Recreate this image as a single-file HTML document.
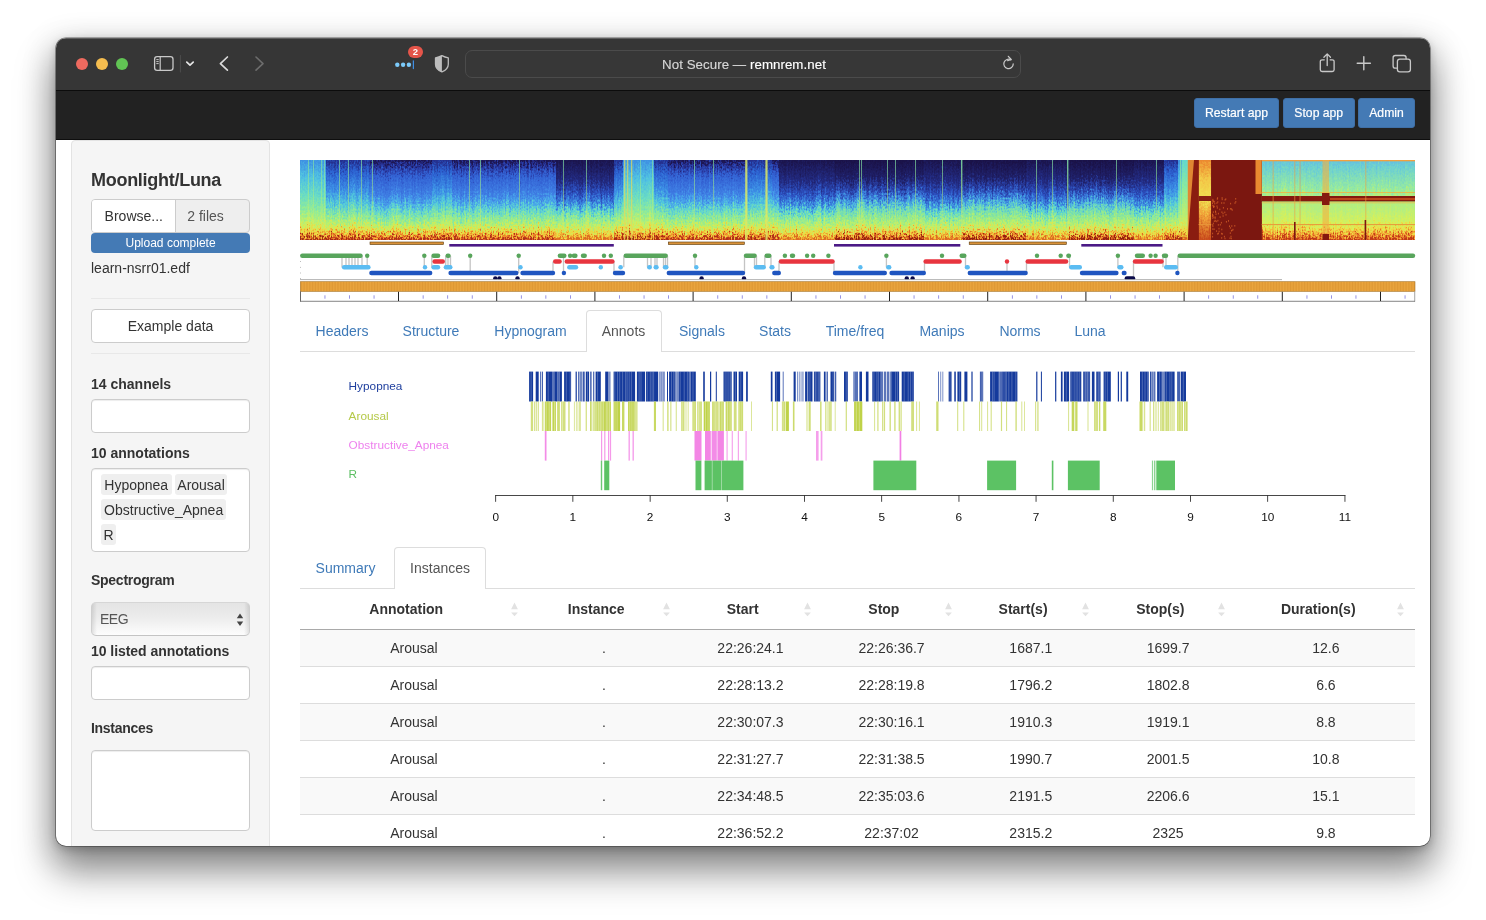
<!DOCTYPE html><html lang="en"><head><meta charset="utf-8"><title>Moonlight/Luna</title><style>
*{box-sizing:border-box}
html,body{margin:0;padding:0}
body{width:1486px;height:920px;overflow:hidden;background:#fff;font-family:"Liberation Sans",sans-serif;font-size:14px;line-height:20px;color:#333;position:relative}
.abs{position:absolute}
#win{position:absolute;left:56px;top:37.5px;width:1374px;height:808px;border-radius:10px;background:#fff;
 box-shadow:0 0 0 0.6px rgba(0,0,0,.55),0 3px 9px rgba(0,0,0,.20),0 24px 38px 2px rgba(0,0,0,.40),0 8px 32px 3px rgba(0,0,0,.19)}
#clip{position:absolute;left:56px;top:37.5px;width:1374px;height:808px;border-radius:10px;overflow:hidden}
#page{position:absolute;left:-56px;top:-37.5px;width:1486px;height:920px;will-change:transform}
#tbar{left:56px;top:37px;width:1374px;height:53px;background:#363636}
#tline{left:56px;top:89.6px;width:1374px;height:1.2px;background:#0c0c0c;z-index:2}
#nav{left:56px;top:90px;width:1374px;height:50px;background:#222;border-bottom:1px solid #0e0e0e}
.btn{position:absolute;top:98px;height:30px;border-radius:3px;background:#447ab5;color:#fff;font-size:12.2px;line-height:28.4px;text-align:center;border:1px solid #3f6fa6;-webkit-text-stroke:0.2px #fff}
#well{left:71px;top:140.2px;width:198.8px;height:720px;background:#f5f5f5;border:1px solid #e3e3e3;border-radius:4px}
.lab{position:absolute;left:91px;font-weight:bold;font-size:14px;line-height:16px;color:#333;white-space:nowrap}
.inp{position:absolute;left:91.3px;width:158.5px;background:#fff;border:1px solid #ccc;border-radius:4px;box-shadow:inset 0 1px 1px rgba(0,0,0,.075)}
.hr{position:absolute;left:91.3px;width:158.5px;height:1px;background:#e8e8e8}
.item{position:absolute;height:21.4px;line-height:22.2px;background:#efefef;border-radius:3px;color:#333;font-size:14px;text-align:center;white-space:nowrap}
.tab{position:absolute;color:#3f7ab8;font-size:14px;line-height:20px;text-align:center;white-space:nowrap}
.tabact{position:absolute;background:#fff;border:1px solid #ddd;border-bottom:none;border-radius:4px 4px 0 0;color:#555;font-size:14px;text-align:center}
.tabline{position:absolute;left:300px;width:1115px;height:1px;background:#ddd}
table{position:absolute;left:300px;top:589px;width:1115px;border-collapse:collapse;table-layout:fixed}
th{height:40px;padding:0 15.4px 0 0;font-weight:bold;text-align:center;position:relative;border-bottom:1.4px solid #a9a9a9;font-size:14px}
td{height:37px;padding:1px 0 0 0;text-align:center;border-top:1px solid #ddd}
tbody tr:first-child td{border-top:none;height:37px}
tbody tr:nth-child(odd) td{background:#f9f9f9}
.srt{position:absolute;top:13px;width:7px;height:15px}
</style></head><body>
<div id="win"></div><div id="clip"><div id="page">
<div id="tbar" class="abs"></div><div id="tline" class="abs"></div>
<div class="abs" style="left:76px;top:58px;width:12px;height:12px;border-radius:6px;background:#ee6a5f"></div>
<div class="abs" style="left:96px;top:58px;width:12px;height:12px;border-radius:6px;background:#f5bd4f"></div>
<div class="abs" style="left:116px;top:58px;width:12px;height:12px;border-radius:6px;background:#61c454"></div>
<svg class="abs" style="left:56px;top:37px" width="1374" height="53" viewBox="56 37 1374 53" fill="none" stroke-linecap="round" stroke-linejoin="round"><rect x="154.6" y="56.6" width="18.4" height="13.8" rx="2.6" stroke="#c9c9c9" stroke-width="1.3"/><path d="M160.2 56.8V70.2" stroke="#c9c9c9" stroke-width="1.2"/><path d="M156.7 59.6h1.6M156.7 61.6h1.6M156.7 63.6h1.6" stroke="#c9c9c9" stroke-width="1"/><path d="M180.4 55.5V72" stroke="#4e4e4e" stroke-width="1"/><path d="M186.8 62.1l3.2 3 3.2-3" stroke="#e6e6e6" stroke-width="1.7"/><path d="M227.4 57l-7 6.6 7 6.6" stroke="#dadada" stroke-width="1.7"/><path d="M256 57l7 6.6-7 6.6" stroke="#6d6d6d" stroke-width="1.6"/><circle cx="397.3" cy="64.8" r="2.2" fill="#7ccbfb" stroke="none"/><circle cx="403.1" cy="64.8" r="2.2" fill="#7ccbfb" stroke="none"/><circle cx="408.9" cy="64.8" r="2.2" fill="#7ccbfb" stroke="none"/><path d="M413.4 60.8V68.6" stroke="#3f8fe4" stroke-width="1.2"/><path d="M441.9 55.6c-2.2 1.2-4.3 1.9-6.4 2.3v6.3c0 3.6 2.4 6 6.4 7.6c4-1.6 6.4-4 6.4-7.6v-6.3c-2.1-.4-4.2-1.1-6.4-2.3z" stroke="#bdbdbd" stroke-width="1.3"/><path d="M441.9 55.6c-2.2 1.2-4.3 1.9-6.4 2.3v6.3c0 3.6 2.4 6 6.4 7.6z" fill="#bdbdbd" stroke="none"/><rect x="465.5" y="50.5" width="555" height="27" rx="6.5" fill="#373737" stroke="#4b4b4b" stroke-width="1"/><path d="M1013.2 63.9a4.7 4.7 0 1 1-2.3-4" stroke="#c9c9c9" stroke-width="1.25"/><path d="M1008.3 56.3l2.9 3.2-3.5 1.2" stroke="#c9c9c9" stroke-width="1.25"/><path d="M1324.3 59.8h-2.2a1.8 1.8 0 0 0-1.8 1.8v8.1a1.8 1.8 0 0 0 1.8 1.8h10.2a1.8 1.8 0 0 0 1.8-1.8v-8.1a1.8 1.8 0 0 0-1.8-1.8h-2.2" stroke="#c9c9c9" stroke-width="1.3"/><path d="M1327.2 65.6V54.2M1323.9 57.2l3.3-3.3 3.3 3.3" stroke="#c9c9c9" stroke-width="1.3"/><path d="M1357.2 63.2h13.2M1363.8 56.6v13.2" stroke="#c9c9c9" stroke-width="1.4"/><path d="M1396.6 68.2h-1.3a2.2 2.2 0 0 1-2.2-2.2v-8.3a2.2 2.2 0 0 1 2.2-2.2h8.6a2.2 2.2 0 0 1 2.2 2.2v1.1" stroke="#c9c9c9" stroke-width="1.3"/><rect x="1397.4" y="59.2" width="13" height="12.6" rx="2.4" stroke="#c9c9c9" stroke-width="1.3"/></svg>
<div class="abs" style="left:408px;top:46.2px;width:15px;height:11.8px;border-radius:6px;background:#e5554a;color:#fff;font-size:9.5px;font-weight:bold;line-height:11.8px;text-align:center">2</div>
<div class="abs" style="left:560px;top:55px;width:368px;height:20px;text-align:center;font-size:13.3px;line-height:20px;color:#d6d6d6;white-space:nowrap;letter-spacing:0.05px;-webkit-text-stroke:0.15px currentColor">Not Secure — <span style="color:#fff">remnrem.net</span></div>
<div id="nav" class="abs"></div>
<div class="btn" style="left:1194px;width:85px">Restart app</div>
<div class="btn" style="left:1283px;width:71.5px">Stop app</div>
<div class="btn" style="left:1358px;width:57px">Admin</div>
<div class="abs" style="left:56px;top:37.5px;width:1374px;height:1px;background:rgba(255,255,255,.2);z-index:3"></div>
<div id="well" class="abs"></div>
<div class="abs" style="left:91px;top:169.2px;font-size:18px;font-weight:bold;line-height:22px;color:#333;white-space:nowrap;letter-spacing:-0.28px">Moonlight/Luna</div>
<div class="abs" style="left:91.3px;top:199.3px;width:158.5px;height:33.4px;border:1px solid #ccc;border-radius:4px;background:#eee;overflow:hidden"><div style="position:absolute;left:0;top:0;width:84px;height:32px;background:#fff;border-right:1px solid #ccc;text-align:center;line-height:33px;color:#333">Browse...</div><div style="position:absolute;left:95px;top:0;line-height:33px;color:#555">2 files</div></div>
<div class="abs" style="left:91.3px;top:233.4px;width:158.5px;height:19.6px;border-radius:4px;background:#447ab5;color:#fff;font-size:12px;line-height:20.6px;text-align:center">Upload complete</div>
<div class="abs" style="left:91px;top:258px;color:#333;white-space:nowrap">learn-nsrr01.edf</div>
<div class="hr" style="top:297.6px"></div>
<div class="inp" style="top:309px;height:33.6px;text-align:center;line-height:32px;color:#333;box-shadow:none">Example data</div>
<div class="hr" style="top:352.8px"></div>
<div class="lab" style="top:376px">14 channels</div>
<div class="inp" style="top:399px;height:33.8px"></div>
<div class="lab" style="top:445px">10 annotations</div>
<div class="inp" style="top:468.2px;height:83.4px"></div>
<div class="item" style="left:101px;top:474.1px;width:70.5px">Hypopnea</div>
<div class="item" style="left:174.6px;top:474.1px;width:52.9px">Arousal</div>
<div class="item" style="left:101px;top:499.1px;width:125.3px">Obstructive_Apnea</div>
<div class="item" style="left:101px;top:524.1px;width:15px">R</div>
<div class="lab" style="top:572px;letter-spacing:-0.27px">Spectrogram</div>
<div class="abs" style="left:91.2px;top:602px;width:158.5px;height:33.6px;border-radius:5px;border:1px solid #cfcfcf;border-top-color:#d6d6d6;border-bottom-color:#c4c4c4;background:linear-gradient(90deg,rgba(0,0,0,.10),rgba(0,0,0,0) 5px,rgba(0,0,0,0) calc(100% - 5px),rgba(0,0,0,.10)),linear-gradient(#e4e4e4,#ececec 45%,#fdfdfd)"><div style="position:absolute;left:7.8px;top:6px;color:#555;letter-spacing:-0.5px">EEG</div><svg style="position:absolute;left:143.4px;top:10px" width="8" height="14" viewBox="0 0 8 14"><path d="M4 0.6L7.2 5.2H0.8zM4 13L7.2 8.4H0.8z" fill="#444"/></svg></div>
<div class="lab" style="top:643px;letter-spacing:-0.05px">10 listed annotations</div>
<div class="inp" style="top:666.2px;height:33.6px"></div>
<div class="lab" style="top:720px;letter-spacing:-0.3px">Instances</div>
<div class="inp" style="top:750.2px;height:80.4px"></div>
<svg class="abs" style="left:300px;top:160px" width="1115" height="80" viewBox="0 0 1115 80">
<defs>
<linearGradient id="gN" gradientUnits="userSpaceOnUse" x1="0" y1="0" x2="0" y2="80"><stop offset="0" stop-color="#1d1652"/><stop offset="0.08" stop-color="#27349a"/><stop offset="0.2" stop-color="#3260d2"/><stop offset="0.42" stop-color="#3f7fe4"/><stop offset="0.53" stop-color="#48a6ea"/><stop offset="0.62" stop-color="#5fd4d0"/><stop offset="0.71" stop-color="#84e6a4"/><stop offset="0.81" stop-color="#b4f070"/><stop offset="0.875" stop-color="#e4e648"/><stop offset="0.925" stop-color="#f3b436"/><stop offset="0.96" stop-color="#ea7a26"/><stop offset="0.99" stop-color="#c4401c"/><stop offset="1" stop-color="#b0301a"/></linearGradient>
<linearGradient id="gD" gradientUnits="userSpaceOnUse" x1="0" y1="0" x2="0" y2="80"><stop offset="0" stop-color="#1a1248"/><stop offset="0.22" stop-color="#1f2068"/><stop offset="0.36" stop-color="#2a44ae"/><stop offset="0.46" stop-color="#3a7cdc"/><stop offset="0.54" stop-color="#4cb4e0"/><stop offset="0.62" stop-color="#70dcb8"/><stop offset="0.72" stop-color="#96ea8c"/><stop offset="0.82" stop-color="#c0f068"/><stop offset="0.885" stop-color="#ecdc48"/><stop offset="0.93" stop-color="#f0a030"/><stop offset="0.965" stop-color="#d85c20"/><stop offset="1" stop-color="#94200f"/></linearGradient>
<linearGradient id="gR" gradientUnits="userSpaceOnUse" x1="0" y1="0" x2="0" y2="80"><stop offset="0" stop-color="#1b154e"/><stop offset="0.26" stop-color="#222a80"/><stop offset="0.42" stop-color="#2c50c0"/><stop offset="0.54" stop-color="#3c88e2"/><stop offset="0.63" stop-color="#55cfd6"/><stop offset="0.73" stop-color="#8cea9a"/><stop offset="0.84" stop-color="#c4f064"/><stop offset="0.92" stop-color="#f0d840"/><stop offset="0.97" stop-color="#ee9a2e"/><stop offset="1" stop-color="#dc6a22"/></linearGradient>
<linearGradient id="gW" gradientUnits="userSpaceOnUse" x1="0" y1="0" x2="0" y2="80"><stop offset="0" stop-color="#3f92e2"/><stop offset="0.22" stop-color="#4fc0e2"/><stop offset="0.45" stop-color="#6adcc4"/><stop offset="0.65" stop-color="#94ec94"/><stop offset="0.8" stop-color="#c8f064"/><stop offset="0.89" stop-color="#f0d840"/><stop offset="0.95" stop-color="#ee8a2a"/><stop offset="1" stop-color="#a02a14"/></linearGradient>
<linearGradient id="gL" gradientUnits="userSpaceOnUse" x1="0" y1="0" x2="0" y2="80"><stop offset="0" stop-color="#24308f"/><stop offset="0.15" stop-color="#2b5fcf"/><stop offset="0.38" stop-color="#3d90e6"/><stop offset="0.54" stop-color="#52c8dc"/><stop offset="0.68" stop-color="#86e8a0"/><stop offset="0.8" stop-color="#bcf06a"/><stop offset="0.875" stop-color="#ece044"/><stop offset="0.93" stop-color="#f0a030"/><stop offset="0.975" stop-color="#d65420"/><stop offset="1" stop-color="#a82a14"/></linearGradient>
<linearGradient id="gE" gradientUnits="userSpaceOnUse" x1="0" y1="0" x2="0" y2="80"><stop offset="0" stop-color="#66c2de"/><stop offset="0.08" stop-color="#6ccfd2"/><stop offset="0.36" stop-color="#96eaa0"/><stop offset="0.46" stop-color="#b8ee78"/><stop offset="0.55" stop-color="#b0ee84"/><stop offset="0.8" stop-color="#d8f058"/><stop offset="0.87" stop-color="#f0d844"/><stop offset="0.93" stop-color="#f09a30"/><stop offset="0.98" stop-color="#d85a20"/><stop offset="1" stop-color="#c03a18"/></linearGradient>
<linearGradient id="gO" gradientUnits="userSpaceOnUse" x1="0" y1="0" x2="0" y2="80"><stop offset="0" stop-color="#ec8a30"/><stop offset="0.25" stop-color="#f3c848"/><stop offset="0.5" stop-color="#f0e050"/><stop offset="0.7" stop-color="#f0a038"/><stop offset="1" stop-color="#c84a1c"/></linearGradient>
<linearGradient id="gG" gradientUnits="userSpaceOnUse" x1="0" y1="0" x2="0" y2="80"><stop offset="0" stop-color="#62d8cf"/><stop offset="0.4" stop-color="#8eeb9a"/><stop offset="0.75" stop-color="#c4f068"/><stop offset="0.9" stop-color="#f0d840"/><stop offset="1" stop-color="#d8601f"/></linearGradient>
<linearGradient id="gline" gradientUnits="userSpaceOnUse" x1="0" y1="0" x2="0" y2="80"><stop offset="0" stop-color="#7fe0a8" stop-opacity="0.85"/><stop offset="0.5" stop-color="#b0ee78" stop-opacity="0.6"/><stop offset="0.85" stop-color="#e8e858" stop-opacity="0.35"/><stop offset="1" stop-color="#e07a28" stop-opacity="0.2"/></linearGradient>
<filter id="noise" x="-2%" y="-40%" width="104%" height="180%" color-interpolation-filters="sRGB"><feTurbulence type="fractalNoise" baseFrequency="0.75 0.45" numOctaves="2" seed="3"/><feColorMatrix type="matrix" values="1 0 0 0 0  0 1 0 0 0  0 0 1 0 0  0 0 0 0 1" result="a"/><feTurbulence type="fractalNoise" baseFrequency="0.55 0.012" numOctaves="1" seed="11"/><feColorMatrix type="matrix" values="1 0 0 0 0  0 1 0 0 0  0 0 1 0 0  0 0 0 0 1" result="b"/><feComposite in="a" in2="b" operator="arithmetic" k1="0" k2="0.75" k3="0.55" k4="-0.15" result="c"/><feColorMatrix in="c" type="matrix" values="0 0 0 0 0.5  0 1 0 0 0  0 0 1 0 0  0 0 0 0 1" result="d"/><feDisplacementMap in="SourceGraphic" in2="d" scale="30" xChannelSelector="R" yChannelSelector="G"/></filter>
</defs>
<g filter="url(#noise)">
<rect x="-20.0" y="-40.0" width="46.5" height="160.0" fill="url(#gW)"/>
<rect x="26.0" y="-40.0" width="44.5" height="160.0" fill="url(#gL)"/>
<rect x="70.0" y="-40.0" width="62.5" height="160.0" fill="url(#gN)"/>
<rect x="132.0" y="-40.0" width="20.5" height="160.0" fill="url(#gL)"/>
<rect x="152.0" y="-40.0" width="68.5" height="160.0" fill="url(#gN)"/>
<rect x="220.0" y="-40.0" width="36.5" height="160.0" fill="url(#gN)"/>
<rect x="256.0" y="-40.0" width="58.5" height="160.0" fill="url(#gR)"/>
<rect x="314.0" y="-40.0" width="9.5" height="160.0" fill="url(#gL)"/>
<rect x="323.0" y="-40.0" width="31.5" height="160.0" fill="url(#gW)"/>
<rect x="354.0" y="-40.0" width="14.5" height="160.0" fill="url(#gL)"/>
<rect x="368.0" y="-40.0" width="78.5" height="160.0" fill="url(#gN)"/>
<rect x="446.0" y="-40.0" width="26.5" height="160.0" fill="url(#gL)"/>
<rect x="472.0" y="-40.0" width="7.5" height="160.0" fill="url(#gN)"/>
<rect x="479.0" y="-40.0" width="56.5" height="160.0" fill="url(#gR)"/>
<rect x="535.0" y="-40.0" width="89.5" height="160.0" fill="url(#gD)"/>
<rect x="624.0" y="-40.0" width="38.5" height="160.0" fill="url(#gR)"/>
<rect x="662.0" y="-40.0" width="6.5" height="160.0" fill="url(#gD)"/>
<rect x="668.0" y="-40.0" width="58.5" height="160.0" fill="url(#gD)"/>
<rect x="726.0" y="-40.0" width="43.5" height="160.0" fill="url(#gR)"/>
<rect x="769.0" y="-40.0" width="12.5" height="160.0" fill="url(#gD)"/>
<rect x="781.0" y="-40.0" width="45.5" height="160.0" fill="url(#gD)"/>
<rect x="826.0" y="-40.0" width="8.5" height="160.0" fill="url(#gD)"/>
<rect x="834.0" y="-40.0" width="30.5" height="160.0" fill="url(#gR)"/>
<rect x="864.0" y="-40.0" width="14.5" height="160.0" fill="url(#gL)"/>
<rect x="878.0" y="-40.0" width="4.5" height="160.0" fill="url(#gW)"/>
<rect x="882.0" y="-40.0" width="6.5" height="160.0" fill="url(#gG)"/>
<rect x="888.0" y="-40.0" width="11.1" height="160.0" fill="#7b1710"/>
<rect x="898.6" y="-40.0" width="13.1" height="160.0" fill="url(#gO)"/>
<rect x="911.2" y="-40.0" width="51.0" height="160.0" fill="#7b1710"/>
<rect x="961.7" y="-40.0" width="178.8" height="160.0" fill="url(#gE)"/>
</g>
<rect x="888.0" y="0.0" width="10.6" height="80.0" fill="#8a1c10"/>
<polygon points="887.7,0 894,0 890,50 887.7,80" fill="#ee9a38" opacity="0.85"/>
<rect x="911.2" y="0.0" width="50.5" height="80.0" fill="#7b1710"/>
<rect x="955.5" y="0.0" width="6.2" height="34.0" fill="#e98a30"/>
<rect x="916.4" y="42.3" width="1.0" height="1.6" fill="#d9642a" opacity="0.75"/>
<rect x="924.6" y="39.0" width="1.0" height="1.6" fill="#d9642a" opacity="0.75"/>
<rect x="921.4" y="51.4" width="1.0" height="1.6" fill="#d9642a" opacity="0.75"/>
<rect x="912.3" y="57.3" width="1.0" height="1.6" fill="#d9642a" opacity="0.75"/>
<rect x="912.2" y="54.2" width="1.0" height="1.6" fill="#d9642a" opacity="0.75"/>
<rect x="912.4" y="39.8" width="1.0" height="1.6" fill="#d9642a" opacity="0.75"/>
<rect x="918.6" y="70.7" width="1.0" height="1.6" fill="#d9642a" opacity="0.75"/>
<rect x="913.0" y="45.4" width="1.0" height="1.6" fill="#d9642a" opacity="0.75"/>
<rect x="923.9" y="75.8" width="1.0" height="1.6" fill="#d9642a" opacity="0.75"/>
<rect x="922.5" y="52.7" width="1.0" height="1.6" fill="#d9642a" opacity="0.75"/>
<rect x="935.2" y="38.0" width="1.0" height="1.6" fill="#d9642a" opacity="0.75"/>
<rect x="931.1" y="48.2" width="1.0" height="1.6" fill="#d9642a" opacity="0.75"/>
<rect x="913.3" y="40.9" width="1.0" height="1.6" fill="#d9642a" opacity="0.75"/>
<rect x="916.1" y="70.3" width="1.0" height="1.6" fill="#d9642a" opacity="0.75"/>
<rect x="913.8" y="60.4" width="1.0" height="1.6" fill="#d9642a" opacity="0.75"/>
<rect x="924.3" y="51.6" width="1.0" height="1.6" fill="#d9642a" opacity="0.75"/>
<rect x="921.7" y="38.6" width="1.0" height="1.6" fill="#d9642a" opacity="0.75"/>
<rect x="912.3" y="44.7" width="1.0" height="1.6" fill="#d9642a" opacity="0.75"/>
<rect x="925.5" y="54.0" width="1.0" height="1.6" fill="#d9642a" opacity="0.75"/>
<rect x="916.2" y="60.6" width="1.0" height="1.6" fill="#d9642a" opacity="0.75"/>
<rect x="919.3" y="48.6" width="1.0" height="1.6" fill="#d9642a" opacity="0.75"/>
<rect x="929.0" y="65.4" width="1.0" height="1.6" fill="#d9642a" opacity="0.75"/>
<rect x="914.9" y="60.1" width="1.0" height="1.6" fill="#d9642a" opacity="0.75"/>
<rect x="921.1" y="72.8" width="1.0" height="1.6" fill="#d9642a" opacity="0.75"/>
<rect x="927.0" y="48.1" width="1.0" height="1.6" fill="#d9642a" opacity="0.75"/>
<rect x="935.3" y="41.0" width="1.0" height="1.6" fill="#d9642a" opacity="0.75"/>
<rect x="918.5" y="67.8" width="1.0" height="1.6" fill="#d9642a" opacity="0.75"/>
<rect x="913.4" y="56.5" width="1.0" height="1.6" fill="#d9642a" opacity="0.75"/>
<rect x="912.2" y="64.1" width="1.0" height="1.6" fill="#d9642a" opacity="0.75"/>
<rect x="928.0" y="60.1" width="1.0" height="1.6" fill="#d9642a" opacity="0.75"/>
<rect x="931.7" y="49.2" width="1.0" height="1.6" fill="#d9642a" opacity="0.75"/>
<rect x="925.9" y="61.0" width="1.0" height="1.6" fill="#d9642a" opacity="0.75"/>
<rect x="922.6" y="55.2" width="1.0" height="1.6" fill="#d9642a" opacity="0.75"/>
<rect x="930.5" y="75.7" width="1.0" height="1.6" fill="#d9642a" opacity="0.75"/>
<rect x="919.8" y="63.9" width="1.0" height="1.6" fill="#d9642a" opacity="0.75"/>
<rect x="912.4" y="65.5" width="1.0" height="1.6" fill="#d9642a" opacity="0.75"/>
<rect x="924.5" y="77.7" width="1.0" height="1.6" fill="#d9642a" opacity="0.75"/>
<rect x="929.9" y="48.0" width="1.0" height="1.6" fill="#d9642a" opacity="0.75"/>
<rect x="917.8" y="64.1" width="1.0" height="1.6" fill="#d9642a" opacity="0.75"/>
<rect x="912.1" y="55.4" width="1.0" height="1.6" fill="#d9642a" opacity="0.75"/>
<rect x="913.7" y="40.9" width="1.0" height="1.6" fill="#d9642a" opacity="0.75"/>
<rect x="912.3" y="68.3" width="1.0" height="1.6" fill="#d9642a" opacity="0.75"/>
<rect x="913.1" y="46.4" width="1.0" height="1.6" fill="#d9642a" opacity="0.75"/>
<rect x="917.9" y="72.6" width="1.0" height="1.6" fill="#d9642a" opacity="0.75"/>
<rect x="912.5" y="54.9" width="1.0" height="1.6" fill="#d9642a" opacity="0.75"/>
<rect x="921.8" y="73.1" width="1.0" height="1.6" fill="#d9642a" opacity="0.75"/>
<rect x="929.8" y="72.3" width="1.0" height="1.6" fill="#d9642a" opacity="0.75"/>
<rect x="915.5" y="53.4" width="1.0" height="1.6" fill="#d9642a" opacity="0.75"/>
<rect x="917.2" y="73.1" width="1.0" height="1.6" fill="#d9642a" opacity="0.75"/>
<rect x="934.5" y="42.3" width="1.0" height="1.6" fill="#d9642a" opacity="0.75"/>
<rect x="913.8" y="45.7" width="1.0" height="1.6" fill="#d9642a" opacity="0.75"/>
<rect x="914.7" y="56.4" width="1.0" height="1.6" fill="#d9642a" opacity="0.75"/>
<rect x="922.9" y="47.0" width="1.0" height="1.6" fill="#d9642a" opacity="0.75"/>
<rect x="912.0" y="53.6" width="1.0" height="1.6" fill="#d9642a" opacity="0.75"/>
<rect x="917.4" y="59.8" width="1.0" height="1.6" fill="#d9642a" opacity="0.75"/>
<rect x="934.3" y="65.0" width="1.0" height="1.6" fill="#d9642a" opacity="0.75"/>
<rect x="920.9" y="61.9" width="1.0" height="1.6" fill="#d9642a" opacity="0.75"/>
<rect x="925.3" y="38.3" width="1.0" height="1.6" fill="#d9642a" opacity="0.75"/>
<rect x="932.5" y="68.8" width="1.0" height="1.6" fill="#d9642a" opacity="0.75"/>
<rect x="931.6" y="69.5" width="1.0" height="1.6" fill="#d9642a" opacity="0.75"/>
<rect x="917.9" y="52.8" width="1.0" height="1.6" fill="#d9642a" opacity="0.75"/>
<rect x="912.8" y="62.6" width="1.0" height="1.6" fill="#d9642a" opacity="0.75"/>
<rect x="912.4" y="38.8" width="1.0" height="1.6" fill="#d9642a" opacity="0.75"/>
<rect x="914.3" y="42.8" width="1.0" height="1.6" fill="#d9642a" opacity="0.75"/>
<rect x="916.8" y="38.2" width="1.0" height="1.6" fill="#d9642a" opacity="0.75"/>
<rect x="912.0" y="42.4" width="1.0" height="1.6" fill="#d9642a" opacity="0.75"/>
<rect x="912.8" y="51.3" width="1.0" height="1.6" fill="#d9642a" opacity="0.75"/>
<rect x="912.1" y="72.7" width="1.0" height="1.6" fill="#d9642a" opacity="0.75"/>
<rect x="923.5" y="42.2" width="1.0" height="1.6" fill="#d9642a" opacity="0.75"/>
<rect x="915.0" y="50.6" width="1.0" height="1.6" fill="#d9642a" opacity="0.75"/>
<rect x="917.3" y="41.2" width="1.0" height="1.6" fill="#d9642a" opacity="0.75"/>
<rect x="930.8" y="77.7" width="1.0" height="1.6" fill="#d9642a" opacity="0.75"/>
<rect x="919.6" y="56.3" width="1.0" height="1.6" fill="#d9642a" opacity="0.75"/>
<rect x="912.6" y="40.3" width="1.0" height="1.6" fill="#d9642a" opacity="0.75"/>
<rect x="916.8" y="47.1" width="1.0" height="1.6" fill="#d9642a" opacity="0.75"/>
<rect x="930.1" y="42.8" width="1.0" height="1.6" fill="#d9642a" opacity="0.75"/>
<rect x="912.1" y="75.9" width="1.0" height="1.6" fill="#d9642a" opacity="0.75"/>
<rect x="921.2" y="42.2" width="1.0" height="1.6" fill="#d9642a" opacity="0.75"/>
<rect x="921.6" y="37.1" width="1.0" height="1.6" fill="#d9642a" opacity="0.75"/>
<rect x="921.2" y="77.1" width="1.0" height="1.6" fill="#d9642a" opacity="0.75"/>
<rect x="931.3" y="65.2" width="1.0" height="1.6" fill="#d9642a" opacity="0.75"/>
<rect x="915.2" y="51.4" width="1.0" height="1.6" fill="#d9642a" opacity="0.75"/>
<rect x="913.6" y="68.4" width="1.0" height="1.6" fill="#d9642a" opacity="0.75"/>
<rect x="921.3" y="68.7" width="1.0" height="1.6" fill="#d9642a" opacity="0.75"/>
<rect x="916.5" y="45.4" width="1.0" height="1.6" fill="#d9642a" opacity="0.75"/>
<rect x="929.5" y="77.4" width="1.0" height="1.6" fill="#d9642a" opacity="0.75"/>
<rect x="930.9" y="69.9" width="1.0" height="1.6" fill="#d9642a" opacity="0.75"/>
<rect x="929.8" y="67.1" width="1.0" height="1.6" fill="#d9642a" opacity="0.75"/>
<rect x="914.6" y="57.7" width="1.0" height="1.6" fill="#d9642a" opacity="0.75"/>
<rect x="917.1" y="37.2" width="1.0" height="1.6" fill="#d9642a" opacity="0.75"/>
<rect x="961.7" y="0.0" width="154.0" height="1.3" fill="#f0a040"/>
<rect x="961.7" y="32.0" width="154.0" height="1.0" fill="#efb348" opacity="0.85"/>
<rect x="898.6" y="36.0" width="12.6" height="5.0" fill="#8a2012"/>
<rect x="961.7" y="36.0" width="154.0" height="5.4" fill="#85190f"/>
<rect x="1030.0" y="38.2" width="85.0" height="1.6" fill="#c9541f"/>
<rect x="961.7" y="42.3" width="154.0" height="1.0" fill="#efb348" opacity="0.7"/>
<rect x="898.6" y="64.0" width="12.6" height="1.1" fill="#e8963a" opacity="0.9"/>
<rect x="961.7" y="64.0" width="154.0" height="1.1" fill="#e8963a" opacity="0.9"/>
<rect x="1022.5" y="0.0" width="6.5" height="80.0" fill="#f0b045" opacity="0.6"/>
<rect x="1022.0" y="33.0" width="7.5" height="12.0" fill="#85190f"/>
<rect x="1022.5" y="74.0" width="6.5" height="6.0" fill="#85190f"/>
<rect x="972.6" y="0.0" width="1.1" height="80.0" fill="#eea040" opacity="0.55"/>
<rect x="994.2" y="0.0" width="1.1" height="80.0" fill="#eea040" opacity="0.55"/>
<rect x="999.5" y="0.0" width="1.1" height="80.0" fill="#eea040" opacity="0.55"/>
<rect x="1065.2" y="0.0" width="1.1" height="80.0" fill="#eea040" opacity="0.55"/>
<rect x="994.0" y="62.0" width="1.6" height="18.0" fill="#7b1710"/>
<rect x="1064.6" y="60.0" width="1.6" height="20.0" fill="#7b1710"/>
<rect x="8.0" y="0.0" width="0.8" height="80.0" fill="url(#gline)"/>
<rect x="13.0" y="0.0" width="0.8" height="80.0" fill="url(#gline)"/>
<rect x="21.0" y="0.0" width="0.8" height="80.0" fill="url(#gline)"/>
<rect x="24.0" y="0.0" width="0.8" height="80.0" fill="url(#gline)"/>
<rect x="39.0" y="0.0" width="0.8" height="80.0" fill="url(#gline)"/>
<rect x="48.0" y="0.0" width="0.8" height="80.0" fill="url(#gline)"/>
<rect x="61.0" y="0.0" width="0.8" height="80.0" fill="url(#gline)"/>
<rect x="72.0" y="0.0" width="0.8" height="80.0" fill="url(#gline)"/>
<rect x="169.0" y="0.0" width="0.8" height="80.0" fill="url(#gline)"/>
<rect x="180.0" y="0.0" width="0.8" height="80.0" fill="url(#gline)"/>
<rect x="219.0" y="0.0" width="0.8" height="80.0" fill="url(#gline)"/>
<rect x="263.0" y="0.0" width="0.8" height="80.0" fill="url(#gline)"/>
<rect x="286.0" y="0.0" width="0.8" height="80.0" fill="url(#gline)"/>
<rect x="324.0" y="0.0" width="1.3" height="80.0" fill="#e4d85c" opacity="0.7"/>
<rect x="327.0" y="0.0" width="1.3" height="80.0" fill="#e4d85c" opacity="0.7"/>
<rect x="331.0" y="0.0" width="1.3" height="80.0" fill="#e4d85c" opacity="0.7"/>
<rect x="340.0" y="0.0" width="0.8" height="80.0" fill="url(#gline)"/>
<rect x="352.0" y="0.0" width="0.8" height="80.0" fill="url(#gline)"/>
<rect x="394.0" y="0.0" width="0.8" height="80.0" fill="url(#gline)"/>
<rect x="413.0" y="0.0" width="0.8" height="80.0" fill="url(#gline)"/>
<rect x="445.2" y="0.0" width="2.2" height="80.0" fill="#dce864" opacity="0.85"/>
<rect x="465.4" y="0.0" width="2.2" height="80.0" fill="#dce864" opacity="0.85"/>
<rect x="559.0" y="0.0" width="0.8" height="80.0" fill="url(#gline)"/>
<rect x="561.0" y="0.0" width="0.8" height="80.0" fill="url(#gline)"/>
<rect x="587.0" y="0.0" width="0.8" height="80.0" fill="url(#gline)"/>
<rect x="595.0" y="0.0" width="0.8" height="80.0" fill="url(#gline)"/>
<rect x="615.0" y="0.0" width="0.8" height="80.0" fill="url(#gline)"/>
<rect x="642.0" y="0.0" width="0.8" height="80.0" fill="url(#gline)"/>
<rect x="661.0" y="0.0" width="1.4" height="80.0" fill="url(#gline)"/>
<rect x="736.0" y="0.0" width="0.8" height="80.0" fill="url(#gline)"/>
<rect x="752.0" y="0.0" width="0.8" height="80.0" fill="url(#gline)"/>
<rect x="767.0" y="0.0" width="1.4" height="80.0" fill="url(#gline)"/>
<rect x="816.0" y="0.0" width="0.8" height="80.0" fill="url(#gline)"/>
<rect x="856.0" y="0.0" width="0.8" height="80.0" fill="url(#gline)"/>
<rect x="880.0" y="0.0" width="1.4" height="80.0" fill="url(#gline)"/>
</svg>
<svg class="abs" style="left:295px;top:240px" width="1125" height="64" viewBox="0 0 1125 64">
<rect x="75" y="2" width="73.5" height="2.6" fill="#d8923a" stroke="#5a3a10" stroke-width="0.6"/>
<rect x="373.29999999999995" y="2" width="76.1" height="2.6" fill="#d8923a" stroke="#5a3a10" stroke-width="0.6"/>
<rect x="674.2" y="2" width="97.2" height="2.6" fill="#d8923a" stroke="#5a3a10" stroke-width="0.6"/>
<rect x="154.3" y="4.0" width="164.5" height="2.6" fill="#4b1a86"/>
<rect x="539.0" y="4.0" width="126.3" height="2.6" fill="#4b1a86"/>
<rect x="786.3" y="4.0" width="81.2" height="2.6" fill="#4b1a86"/>
<rect x="5.2" y="15.4" width="0.8" height="0.8" fill="#999"/>
<rect x="5.2" y="21.1" width="0.8" height="0.8" fill="#999"/>
<rect x="5.2" y="26.9" width="0.8" height="0.8" fill="#999"/>
<rect x="5.2" y="32.6" width="0.8" height="0.8" fill="#999"/>
<rect x="5.2" y="38.0" width="0.8" height="0.8" fill="#999"/>
<line x1="47.0" y1="15.8" x2="47.0" y2="27.3" stroke="#c4c4c4" stroke-width="1.3"/>
<line x1="51.0" y1="15.8" x2="51.0" y2="27.3" stroke="#c4c4c4" stroke-width="1.3"/>
<line x1="54.0" y1="15.8" x2="54.0" y2="27.3" stroke="#c4c4c4" stroke-width="1.3"/>
<line x1="57.0" y1="15.8" x2="57.0" y2="27.3" stroke="#c4c4c4" stroke-width="1.3"/>
<line x1="60.0" y1="15.8" x2="60.0" y2="27.3" stroke="#c4c4c4" stroke-width="1.3"/>
<line x1="63.0" y1="15.8" x2="63.0" y2="27.3" stroke="#c4c4c4" stroke-width="1.3"/>
<line x1="67.0" y1="15.8" x2="67.0" y2="27.3" stroke="#c4c4c4" stroke-width="1.3"/>
<line x1="72.2" y1="15.8" x2="72.2" y2="27.3" stroke="#c4c4c4" stroke-width="1.3"/>
<line x1="129.3" y1="15.8" x2="129.3" y2="27.3" stroke="#c4c4c4" stroke-width="1.3"/>
<line x1="136.8" y1="15.8" x2="136.8" y2="27.3" stroke="#c4c4c4" stroke-width="1.3"/>
<line x1="150.7" y1="15.8" x2="150.7" y2="27.3" stroke="#c4c4c4" stroke-width="1.3"/>
<line x1="153.0" y1="15.8" x2="153.0" y2="27.3" stroke="#c4c4c4" stroke-width="1.3"/>
<line x1="155.5" y1="15.8" x2="155.5" y2="27.3" stroke="#c4c4c4" stroke-width="1.3"/>
<line x1="175.2" y1="15.8" x2="175.2" y2="33.0" stroke="#c4c4c4" stroke-width="1.3"/>
<line x1="223.7" y1="15.8" x2="223.7" y2="33.0" stroke="#c4c4c4" stroke-width="1.3"/>
<line x1="258.0" y1="21.5" x2="258.0" y2="33.0" stroke="#c4c4c4" stroke-width="1.3"/>
<line x1="268.5" y1="15.8" x2="268.5" y2="33.0" stroke="#c4c4c4" stroke-width="1.3"/>
<line x1="319.0" y1="21.5" x2="319.0" y2="33.0" stroke="#c4c4c4" stroke-width="1.3"/>
<line x1="328.8" y1="15.8" x2="328.8" y2="27.3" stroke="#c4c4c4" stroke-width="1.3"/>
<line x1="352.5" y1="15.8" x2="352.5" y2="27.3" stroke="#c4c4c4" stroke-width="1.3"/>
<line x1="356.0" y1="15.8" x2="356.0" y2="27.3" stroke="#c4c4c4" stroke-width="1.3"/>
<line x1="360.0" y1="15.8" x2="360.0" y2="27.3" stroke="#c4c4c4" stroke-width="1.3"/>
<line x1="362.0" y1="15.8" x2="362.0" y2="27.3" stroke="#c4c4c4" stroke-width="1.3"/>
<line x1="368.5" y1="15.8" x2="368.5" y2="27.3" stroke="#c4c4c4" stroke-width="1.3"/>
<line x1="370.5" y1="15.8" x2="370.5" y2="27.3" stroke="#c4c4c4" stroke-width="1.3"/>
<line x1="372.5" y1="15.8" x2="372.5" y2="27.3" stroke="#c4c4c4" stroke-width="1.3"/>
<line x1="400.0" y1="15.8" x2="400.0" y2="27.3" stroke="#c4c4c4" stroke-width="1.3"/>
<line x1="449.5" y1="15.8" x2="449.5" y2="33.0" stroke="#c4c4c4" stroke-width="1.3"/>
<line x1="459.5" y1="15.8" x2="459.5" y2="27.3" stroke="#c4c4c4" stroke-width="1.3"/>
<line x1="461.5" y1="15.8" x2="461.5" y2="27.3" stroke="#c4c4c4" stroke-width="1.3"/>
<line x1="469.8" y1="15.8" x2="469.8" y2="27.3" stroke="#c4c4c4" stroke-width="1.3"/>
<line x1="476.0" y1="15.8" x2="476.0" y2="27.3" stroke="#c4c4c4" stroke-width="1.3"/>
<line x1="484.0" y1="21.5" x2="484.0" y2="33.0" stroke="#c4c4c4" stroke-width="1.3"/>
<line x1="539.0" y1="21.5" x2="539.0" y2="33.0" stroke="#c4c4c4" stroke-width="1.3"/>
<line x1="591.4" y1="15.8" x2="591.4" y2="27.3" stroke="#c4c4c4" stroke-width="1.3"/>
<line x1="629.5" y1="21.5" x2="629.5" y2="33.0" stroke="#c4c4c4" stroke-width="1.3"/>
<line x1="670.5" y1="15.8" x2="670.5" y2="27.3" stroke="#c4c4c4" stroke-width="1.3"/>
<line x1="712.0" y1="21.5" x2="712.0" y2="33.0" stroke="#c4c4c4" stroke-width="1.3"/>
<line x1="731.5" y1="21.5" x2="731.5" y2="33.0" stroke="#c4c4c4" stroke-width="1.3"/>
<line x1="774.5" y1="15.8" x2="774.5" y2="27.3" stroke="#c4c4c4" stroke-width="1.3"/>
<line x1="822.9" y1="15.8" x2="822.9" y2="27.3" stroke="#c4c4c4" stroke-width="1.3"/>
<line x1="838.5" y1="21.5" x2="838.5" y2="38.4" stroke="#c4c4c4" stroke-width="1.3"/>
<line x1="868.0" y1="15.8" x2="868.0" y2="27.3" stroke="#c4c4c4" stroke-width="1.3"/>
<line x1="871.0" y1="15.8" x2="871.0" y2="27.3" stroke="#c4c4c4" stroke-width="1.3"/>
<line x1="882.8" y1="15.8" x2="882.8" y2="33.0" stroke="#c4c4c4" stroke-width="1.3"/>
<circle cx="200.3" cy="38.4" r="2.2" fill="#0a0a4a"/>
<circle cx="204.4" cy="38.4" r="2.2" fill="#0a0a4a"/>
<circle cx="222.5" cy="38.4" r="2.2" fill="#0a0a4a"/>
<circle cx="406.6" cy="38.4" r="2.2" fill="#0a0a4a"/>
<circle cx="449.0" cy="38.4" r="2.2" fill="#0a0a4a"/>
<circle cx="611.8" cy="38.4" r="2.2" fill="#0a0a4a"/>
<circle cx="617.6" cy="38.4" r="2.2" fill="#0a0a4a"/>
<line x1="831.8" y1="38.4" x2="838.1" y2="38.4" stroke="#0a0a4a" stroke-width="4.4" stroke-linecap="round"/>
<rect x="5.0" y="39.8" width="1115.0" height="1.8" fill="#fff"/>
<rect x="5.0" y="39.2" width="982.0" height="0.9" fill="#ababab"/>
<line x1="76.4" y1="33.0" x2="135.2" y2="33.0" stroke="#1f55c0" stroke-width="4.4" stroke-linecap="round"/>
<line x1="155.6" y1="33.0" x2="221.3" y2="33.0" stroke="#1f55c0" stroke-width="4.4" stroke-linecap="round"/>
<line x1="227.5" y1="33.0" x2="258.0" y2="33.0" stroke="#1f55c0" stroke-width="4.4" stroke-linecap="round"/>
<circle cx="268.9" cy="33.0" r="2.2" fill="#1f55c0"/>
<line x1="320.0" y1="33.0" x2="328.0" y2="33.0" stroke="#1f55c0" stroke-width="4.4" stroke-linecap="round"/>
<line x1="373.8" y1="33.0" x2="448.0" y2="33.0" stroke="#1f55c0" stroke-width="4.4" stroke-linecap="round"/>
<line x1="479.3" y1="33.0" x2="483.8" y2="33.0" stroke="#1f55c0" stroke-width="4.4" stroke-linecap="round"/>
<line x1="540.0" y1="33.0" x2="589.8" y2="33.0" stroke="#1f55c0" stroke-width="4.4" stroke-linecap="round"/>
<line x1="596.6" y1="33.0" x2="628.8" y2="33.0" stroke="#1f55c0" stroke-width="4.4" stroke-linecap="round"/>
<line x1="674.8" y1="33.0" x2="730.6" y2="33.0" stroke="#1f55c0" stroke-width="4.4" stroke-linecap="round"/>
<line x1="787.0" y1="33.0" x2="821.4" y2="33.0" stroke="#1f55c0" stroke-width="4.4" stroke-linecap="round"/>
<line x1="828.8" y1="33.0" x2="829.5" y2="33.0" stroke="#1f55c0" stroke-width="4.4" stroke-linecap="round"/>
<circle cx="882.4" cy="33.0" r="2.2" fill="#1f55c0"/>
<line x1="49.1" y1="27.3" x2="73.4" y2="27.3" stroke="#5bbcf2" stroke-width="4.4" stroke-linecap="round"/>
<circle cx="130.0" cy="27.3" r="2.2" fill="#5bbcf2"/>
<line x1="138.6" y1="27.3" x2="143.0" y2="27.3" stroke="#5bbcf2" stroke-width="4.4" stroke-linecap="round"/>
<line x1="150.9" y1="27.3" x2="155.3" y2="27.3" stroke="#5bbcf2" stroke-width="4.4" stroke-linecap="round"/>
<circle cx="225.5" cy="27.3" r="2.2" fill="#5bbcf2"/>
<line x1="274.3" y1="27.3" x2="281.0" y2="27.3" stroke="#5bbcf2" stroke-width="4.4" stroke-linecap="round"/>
<circle cx="305.8" cy="27.3" r="2.2" fill="#5bbcf2"/>
<line x1="325.7" y1="27.3" x2="325.5" y2="27.3" stroke="#5bbcf2" stroke-width="4.4" stroke-linecap="round"/>
<line x1="354.3" y1="27.3" x2="354.7" y2="27.3" stroke="#5bbcf2" stroke-width="4.4" stroke-linecap="round"/>
<line x1="361.5" y1="27.3" x2="360.7" y2="27.3" stroke="#5bbcf2" stroke-width="4.4" stroke-linecap="round"/>
<line x1="370.0" y1="27.3" x2="371.3" y2="27.3" stroke="#5bbcf2" stroke-width="4.4" stroke-linecap="round"/>
<circle cx="401.3" cy="27.3" r="2.2" fill="#5bbcf2"/>
<line x1="461.0" y1="27.3" x2="468.7" y2="27.3" stroke="#5bbcf2" stroke-width="4.4" stroke-linecap="round"/>
<line x1="477.4" y1="27.3" x2="476.6" y2="27.3" stroke="#5bbcf2" stroke-width="4.4" stroke-linecap="round"/>
<circle cx="565.4" cy="27.3" r="2.2" fill="#5bbcf2"/>
<line x1="593.3" y1="27.3" x2="594.2" y2="27.3" stroke="#5bbcf2" stroke-width="4.4" stroke-linecap="round"/>
<line x1="672.0" y1="27.3" x2="672.7" y2="27.3" stroke="#5bbcf2" stroke-width="4.4" stroke-linecap="round"/>
<line x1="776.2" y1="27.3" x2="784.8" y2="27.3" stroke="#5bbcf2" stroke-width="4.4" stroke-linecap="round"/>
<line x1="824.5" y1="27.3" x2="826.3" y2="27.3" stroke="#5bbcf2" stroke-width="4.4" stroke-linecap="round"/>
<line x1="871.2" y1="27.3" x2="880.8" y2="27.3" stroke="#5bbcf2" stroke-width="4.4" stroke-linecap="round"/>
<line x1="139.6" y1="21.5" x2="147.8" y2="21.5" stroke="#e8353f" stroke-width="4.4" stroke-linecap="round"/>
<line x1="260.2" y1="21.5" x2="264.6" y2="21.5" stroke="#e8353f" stroke-width="4.4" stroke-linecap="round"/>
<line x1="271.8" y1="21.5" x2="317.4" y2="21.5" stroke="#e8353f" stroke-width="4.4" stroke-linecap="round"/>
<line x1="485.9" y1="21.5" x2="537.5" y2="21.5" stroke="#e8353f" stroke-width="4.4" stroke-linecap="round"/>
<line x1="630.6" y1="21.5" x2="664.6" y2="21.5" stroke="#e8353f" stroke-width="4.4" stroke-linecap="round"/>
<circle cx="712.0" cy="21.5" r="2.2" fill="#e8353f"/>
<line x1="732.7" y1="21.5" x2="771.1" y2="21.5" stroke="#e8353f" stroke-width="4.4" stroke-linecap="round"/>
<line x1="840.0" y1="21.5" x2="866.6" y2="21.5" stroke="#e8353f" stroke-width="4.4" stroke-linecap="round"/>
<line x1="7.3" y1="15.8" x2="65.5" y2="15.8" stroke="#58a55c" stroke-width="4.4" stroke-linecap="round"/>
<circle cx="72.2" cy="15.8" r="2.2" fill="#58a55c"/>
<circle cx="129.3" cy="15.8" r="2.2" fill="#58a55c"/>
<line x1="138.6" y1="15.8" x2="143.1" y2="15.8" stroke="#58a55c" stroke-width="4.4" stroke-linecap="round"/>
<line x1="152.7" y1="15.8" x2="153.5" y2="15.8" stroke="#58a55c" stroke-width="4.4" stroke-linecap="round"/>
<circle cx="175.2" cy="15.8" r="2.2" fill="#58a55c"/>
<circle cx="223.7" cy="15.8" r="2.2" fill="#58a55c"/>
<line x1="264.9" y1="15.8" x2="269.3" y2="15.8" stroke="#58a55c" stroke-width="4.4" stroke-linecap="round"/>
<circle cx="275.1" cy="15.8" r="2.2" fill="#58a55c"/>
<circle cx="278.9" cy="15.8" r="2.2" fill="#58a55c"/>
<circle cx="280.4" cy="15.8" r="2.2" fill="#58a55c"/>
<line x1="288.0" y1="15.8" x2="289.7" y2="15.8" stroke="#58a55c" stroke-width="4.4" stroke-linecap="round"/>
<circle cx="309.0" cy="15.8" r="2.2" fill="#58a55c"/>
<circle cx="315.8" cy="15.8" r="2.2" fill="#58a55c"/>
<line x1="330.8" y1="15.8" x2="370.7" y2="15.8" stroke="#58a55c" stroke-width="4.4" stroke-linecap="round"/>
<circle cx="400.0" cy="15.8" r="2.2" fill="#58a55c"/>
<line x1="451.0" y1="15.8" x2="459.6" y2="15.8" stroke="#58a55c" stroke-width="4.4" stroke-linecap="round"/>
<line x1="471.7" y1="15.8" x2="474.3" y2="15.8" stroke="#58a55c" stroke-width="4.4" stroke-linecap="round"/>
<circle cx="489.9" cy="15.8" r="2.2" fill="#58a55c"/>
<line x1="498.0" y1="15.8" x2="497.0" y2="15.8" stroke="#58a55c" stroke-width="4.4" stroke-linecap="round"/>
<circle cx="512.1" cy="15.8" r="2.2" fill="#58a55c"/>
<circle cx="518.2" cy="15.8" r="2.2" fill="#58a55c"/>
<circle cx="533.4" cy="15.8" r="2.2" fill="#58a55c"/>
<circle cx="591.4" cy="15.8" r="2.2" fill="#58a55c"/>
<circle cx="647.0" cy="15.8" r="2.2" fill="#58a55c"/>
<line x1="666.7" y1="15.8" x2="669.3" y2="15.8" stroke="#58a55c" stroke-width="4.4" stroke-linecap="round"/>
<circle cx="742.0" cy="15.8" r="2.2" fill="#58a55c"/>
<circle cx="765.7" cy="15.8" r="2.2" fill="#58a55c"/>
<line x1="773.4" y1="15.8" x2="773.9" y2="15.8" stroke="#58a55c" stroke-width="4.4" stroke-linecap="round"/>
<circle cx="822.9" cy="15.8" r="2.2" fill="#58a55c"/>
<line x1="842.0" y1="15.8" x2="847.8" y2="15.8" stroke="#58a55c" stroke-width="4.4" stroke-linecap="round"/>
<circle cx="855.6" cy="15.8" r="2.2" fill="#58a55c"/>
<circle cx="860.6" cy="15.8" r="2.2" fill="#58a55c"/>
<line x1="869.0" y1="15.8" x2="871.0" y2="15.8" stroke="#58a55c" stroke-width="4.4" stroke-linecap="round"/>
<line x1="884.8" y1="15.8" x2="1118.0" y2="15.8" stroke="#58a55c" stroke-width="4.4" stroke-linecap="round"/>
<defs><pattern id="ostr" width="1.55" height="10" patternUnits="userSpaceOnUse"><rect width="1.55" height="10" fill="#eaa53e"/><rect width="0.5" height="10" fill="#d8912e"/></pattern></defs>
<rect x="5.3" y="41.7" width="1114.7" height="9.7" fill="url(#ostr)"/>
<rect x="5.300000000000011" y="41.69999999999999" width="1114.7" height="9.7" fill="none" stroke="#a8762a" stroke-width="0.6"/>
<rect x="5.0" y="51.4" width="0.9" height="10.2" fill="#555"/>
<rect x="1119.3" y="51.4" width="0.9" height="10.2" fill="#999"/>
<rect x="5.0" y="60.8" width="1115.0" height="0.9" fill="#777"/>
<rect x="29.5" y="55.3" width="0.9" height="3.4" fill="#8a86e0"/>
<rect x="54.0" y="55.3" width="0.9" height="3.4" fill="#8a86e0"/>
<rect x="78.6" y="55.3" width="0.9" height="3.4" fill="#8a86e0"/>
<rect x="103.0" y="51.8" width="1.0" height="9.2" fill="#222"/>
<rect x="127.7" y="55.3" width="0.9" height="3.4" fill="#8a86e0"/>
<rect x="152.2" y="55.3" width="0.9" height="3.4" fill="#8a86e0"/>
<rect x="176.8" y="55.3" width="0.9" height="3.4" fill="#8a86e0"/>
<rect x="201.2" y="51.8" width="1.0" height="9.2" fill="#222"/>
<rect x="225.9" y="55.3" width="0.9" height="3.4" fill="#8a86e0"/>
<rect x="250.4" y="55.3" width="0.9" height="3.4" fill="#8a86e0"/>
<rect x="275.0" y="55.3" width="0.9" height="3.4" fill="#8a86e0"/>
<rect x="299.4" y="51.8" width="1.0" height="9.2" fill="#222"/>
<rect x="324.1" y="55.3" width="0.9" height="3.4" fill="#8a86e0"/>
<rect x="348.6" y="55.3" width="0.9" height="3.4" fill="#8a86e0"/>
<rect x="373.1" y="55.3" width="0.9" height="3.4" fill="#8a86e0"/>
<rect x="397.6" y="51.8" width="1.0" height="9.2" fill="#222"/>
<rect x="422.3" y="55.3" width="0.9" height="3.4" fill="#8a86e0"/>
<rect x="446.8" y="55.3" width="0.9" height="3.4" fill="#8a86e0"/>
<rect x="471.4" y="55.3" width="0.9" height="3.4" fill="#8a86e0"/>
<rect x="495.8" y="51.8" width="1.0" height="9.2" fill="#222"/>
<rect x="520.5" y="55.3" width="0.9" height="3.4" fill="#8a86e0"/>
<rect x="545.0" y="55.3" width="0.9" height="3.4" fill="#8a86e0"/>
<rect x="569.6" y="55.3" width="0.9" height="3.4" fill="#8a86e0"/>
<rect x="594.0" y="51.8" width="1.0" height="9.2" fill="#222"/>
<rect x="618.6" y="55.3" width="0.9" height="3.4" fill="#8a86e0"/>
<rect x="643.2" y="55.3" width="0.9" height="3.4" fill="#8a86e0"/>
<rect x="667.8" y="55.3" width="0.9" height="3.4" fill="#8a86e0"/>
<rect x="692.2" y="51.8" width="1.0" height="9.2" fill="#222"/>
<rect x="716.9" y="55.3" width="0.9" height="3.4" fill="#8a86e0"/>
<rect x="741.4" y="55.3" width="0.9" height="3.4" fill="#8a86e0"/>
<rect x="766.0" y="55.3" width="0.9" height="3.4" fill="#8a86e0"/>
<rect x="790.4" y="51.8" width="1.0" height="9.2" fill="#222"/>
<rect x="815.0" y="55.3" width="0.9" height="3.4" fill="#8a86e0"/>
<rect x="839.6" y="55.3" width="0.9" height="3.4" fill="#8a86e0"/>
<rect x="864.1" y="55.3" width="0.9" height="3.4" fill="#8a86e0"/>
<rect x="888.6" y="51.8" width="1.0" height="9.2" fill="#222"/>
<rect x="913.2" y="55.3" width="0.9" height="3.4" fill="#8a86e0"/>
<rect x="937.8" y="55.3" width="0.9" height="3.4" fill="#8a86e0"/>
<rect x="962.3" y="55.3" width="0.9" height="3.4" fill="#8a86e0"/>
<rect x="986.8" y="51.8" width="1.0" height="9.2" fill="#222"/>
<rect x="1011.5" y="55.3" width="0.9" height="3.4" fill="#8a86e0"/>
<rect x="1036.0" y="55.3" width="0.9" height="3.4" fill="#8a86e0"/>
<rect x="1060.5" y="55.3" width="0.9" height="3.4" fill="#8a86e0"/>
<rect x="1085.0" y="51.8" width="1.0" height="9.2" fill="#222"/>
<rect x="1109.6" y="55.3" width="0.9" height="3.4" fill="#8a86e0"/>
</svg>
<div class="tabline" style="top:351px"></div>
<div class="tab" style="left:296px;top:321px;width:92px">Headers</div>
<div class="tab" style="left:382px;top:321px;width:98px">Structure</div>
<div class="tab" style="left:474px;top:321px;width:113px">Hypnogram</div>
<div class="tabact" style="left:585.5px;top:309.5px;width:76px;height:42.6px;line-height:40px">Annots</div>
<div class="tab" style="left:659px;top:321px;width:86px">Signals</div>
<div class="tab" style="left:739px;top:321px;width:72px">Stats</div>
<div class="tab" style="left:805px;top:321px;width:100px">Time/freq</div>
<div class="tab" style="left:899px;top:321px;width:86px">Manips</div>
<div class="tab" style="left:979px;top:321px;width:82px">Norms</div>
<div class="tab" style="left:1055px;top:321px;width:70px">Luna</div>
<div class="tabline" style="top:588.2px"></div>
<div class="tab" style="left:300px;top:558px;width:91px">Summary</div>
<div class="tabact" style="left:394.4px;top:547.4px;width:91.4px;height:41.8px;line-height:40px">Instances</div>
<svg class="abs" style="left:300px;top:360px" width="1115" height="175" viewBox="0 0 1115 175" font-family="Liberation Sans, sans-serif" font-size="11.8">
<text x="48.60000000000002" y="30.2" fill="#1f3f9e">Hypopnea</text>
<g fill="#153a9c">
<rect x="229.1" y="11.6" width="4.0" height="29.9"/>
<rect x="235.7" y="11.6" width="3.0" height="29.9"/>
<rect x="240.3" y="11.6" width="0.8" height="29.9"/>
<rect x="241.9" y="11.6" width="0.9" height="29.9"/>
<rect x="245.9" y="11.6" width="6.1" height="29.9"/>
<rect x="252.0" y="11.6" width="2.3" height="29.9" opacity="0.70"/>
<rect x="254.3" y="11.6" width="3.1" height="29.9"/>
<rect x="257.4" y="11.6" width="2.1" height="29.9" opacity="0.75"/>
<rect x="259.5" y="11.6" width="2.4" height="29.9"/>
<rect x="264.1" y="11.6" width="7.0" height="29.9"/>
<rect x="275.6" y="11.6" width="1.2" height="29.9"/>
<rect x="278.1" y="11.6" width="1.4" height="29.9" opacity="0.80"/>
<rect x="280.4" y="11.6" width="1.2" height="29.9"/>
<rect x="282.6" y="11.6" width="2.1" height="29.9" opacity="0.85"/>
<rect x="285.8" y="11.6" width="3.3" height="29.9"/>
<rect x="290.0" y="11.6" width="1.7" height="29.9" opacity="0.70"/>
<rect x="293.1" y="11.6" width="1.2" height="29.9" opacity="0.80"/>
<rect x="295.6" y="11.6" width="5.2" height="29.9"/>
<rect x="305.2" y="11.6" width="2.8" height="29.9"/>
<rect x="308.0" y="11.6" width="2.6" height="29.9" opacity="0.55"/>
<rect x="313.6" y="11.6" width="21.5" height="29.9"/>
<rect x="336.9" y="11.6" width="8.2" height="29.9"/>
<rect x="346.0" y="11.6" width="12.2" height="29.9"/>
<rect x="359.1" y="11.6" width="5.8" height="29.9" opacity="0.55"/>
<rect x="367.0" y="11.6" width="1.0" height="29.9"/>
<rect x="369.1" y="11.6" width="5.8" height="29.9"/>
<rect x="374.9" y="11.6" width="4.0" height="29.9" opacity="0.60"/>
<rect x="378.9" y="11.6" width="10.0" height="29.9"/>
<rect x="388.9" y="11.6" width="1.7" height="29.9" opacity="0.70"/>
<rect x="390.6" y="11.6" width="5.2" height="29.9"/>
<rect x="403.2" y="11.6" width="1.6" height="29.9"/>
<rect x="410.0" y="11.6" width="1.2" height="29.9"/>
<rect x="415.8" y="11.6" width="1.0" height="29.9"/>
<rect x="423.5" y="11.6" width="8.2" height="29.9"/>
<rect x="433.5" y="11.6" width="3.5" height="29.9"/>
<rect x="438.7" y="11.6" width="4.4" height="29.9"/>
<rect x="446.1" y="11.6" width="1.7" height="29.9"/>
<rect x="470.8" y="11.6" width="1.7" height="29.9"/>
<rect x="474.9" y="11.6" width="5.2" height="29.9"/>
<rect x="482.7" y="11.6" width="1.0" height="29.9" opacity="0.70"/>
<rect x="493.6" y="11.6" width="2.1" height="29.9"/>
<rect x="497.1" y="11.6" width="0.9" height="29.9" opacity="0.60"/>
<rect x="498.8" y="11.6" width="0.9" height="29.9" opacity="0.60"/>
<rect x="500.6" y="11.6" width="0.9" height="29.9" opacity="0.60"/>
<rect x="502.5" y="11.6" width="0.9" height="29.9" opacity="0.80"/>
<rect x="505.1" y="11.6" width="2.4" height="29.9"/>
<rect x="508.1" y="11.6" width="4.4" height="29.9"/>
<rect x="513.9" y="11.6" width="6.5" height="29.9" opacity="0.92"/>
<rect x="523.9" y="11.6" width="1.7" height="29.9"/>
<rect x="526.5" y="11.6" width="1.4" height="29.9" opacity="0.80"/>
<rect x="530.5" y="11.6" width="3.8" height="29.9"/>
<rect x="535.2" y="11.6" width="1.0" height="29.9"/>
<rect x="544.0" y="11.6" width="3.8" height="29.9"/>
<rect x="553.3" y="11.6" width="4.7" height="29.9" opacity="0.72"/>
<rect x="559.4" y="11.6" width="2.6" height="29.9"/>
<rect x="565.9" y="11.6" width="2.6" height="29.9"/>
<rect x="572.3" y="11.6" width="8.4" height="29.9"/>
<rect x="580.7" y="11.6" width="2.4" height="29.9" opacity="0.70"/>
<rect x="583.9" y="11.6" width="2.4" height="29.9" opacity="0.70"/>
<rect x="587.0" y="11.6" width="2.4" height="29.9" opacity="0.70"/>
<rect x="590.4" y="11.6" width="8.7" height="29.9"/>
<rect x="601.7" y="11.6" width="12.2" height="29.9"/>
<rect x="638.0" y="11.6" width="1.0" height="29.9" opacity="0.70"/>
<rect x="640.2" y="11.6" width="1.0" height="29.9" opacity="0.55"/>
<rect x="642.3" y="11.6" width="1.0" height="29.9" opacity="0.55"/>
<rect x="648.6" y="11.6" width="3.0" height="29.9" opacity="0.90"/>
<rect x="654.2" y="11.6" width="1.7" height="29.9" opacity="0.90"/>
<rect x="657.4" y="11.6" width="3.8" height="29.9"/>
<rect x="664.4" y="11.6" width="3.0" height="29.9"/>
<rect x="671.4" y="11.6" width="1.2" height="29.9"/>
<rect x="679.9" y="11.6" width="3.3" height="29.9" opacity="0.80"/>
<rect x="690.1" y="11.6" width="8.7" height="29.9"/>
<rect x="698.8" y="11.6" width="1.0" height="29.9" opacity="0.75"/>
<rect x="700.0" y="11.6" width="2.1" height="29.9" opacity="0.75"/>
<rect x="702.1" y="11.6" width="3.1" height="29.9" opacity="0.90"/>
<rect x="705.2" y="11.6" width="12.2" height="29.9"/>
<rect x="736.2" y="11.6" width="1.2" height="29.9"/>
<rect x="740.9" y="11.6" width="1.0" height="29.9"/>
<rect x="755.1" y="11.6" width="1.2" height="29.9"/>
<rect x="760.9" y="11.6" width="1.7" height="29.9"/>
<rect x="763.9" y="11.6" width="5.2" height="29.9"/>
<rect x="770.3" y="11.6" width="11.0" height="29.9"/>
<rect x="783.1" y="11.6" width="7.0" height="29.9" opacity="0.85"/>
<rect x="791.9" y="11.6" width="2.6" height="29.9"/>
<rect x="796.2" y="11.6" width="4.4" height="29.9" opacity="0.90"/>
<rect x="803.6" y="11.6" width="7.2" height="29.9"/>
<rect x="817.8" y="11.6" width="1.2" height="29.9"/>
<rect x="820.7" y="11.6" width="1.2" height="29.9"/>
<rect x="826.3" y="11.6" width="1.9" height="29.9"/>
<rect x="840.0" y="11.6" width="8.7" height="29.9"/>
<rect x="850.1" y="11.6" width="1.4" height="29.9"/>
<rect x="852.2" y="11.6" width="1.4" height="29.9" opacity="0.80"/>
<rect x="854.3" y="11.6" width="1.0" height="29.9"/>
<rect x="857.1" y="11.6" width="4.7" height="29.9"/>
<rect x="861.9" y="11.6" width="2.6" height="29.9" opacity="0.60"/>
<rect x="864.5" y="11.6" width="10.1" height="29.9"/>
<rect x="877.1" y="11.6" width="3.1" height="29.9" opacity="0.80"/>
<rect x="880.8" y="11.6" width="5.2" height="29.9"/>
</g>
<path d="M231.1 11.6v29.9M248.2 11.6v29.9M266.3 11.6v29.9M270.2 11.6v29.9M287.5 11.6v29.9M297.6 11.6v29.9M314.8 11.6v29.9M317.5 11.6v29.9M319.7 11.6v29.9M322.6 11.6v29.9M325.6 11.6v29.9M327.1 11.6v29.9M329.2 11.6v29.9M331.4 11.6v29.9M339.1 11.6v29.9M341.0 11.6v29.9M347.2 11.6v29.9M350.3 11.6v29.9M352.1 11.6v29.9M353.6 11.6v29.9M360.4 11.6v29.9M362.5 11.6v29.9M371.5 11.6v29.9M373.7 11.6v29.9M376.7 11.6v29.9M380.2 11.6v29.9M384.2 11.6v29.9M387.4 11.6v29.9M393.0 11.6v29.9M425.1 11.6v29.9M427.0 11.6v29.9M428.9 11.6v29.9M430.6 11.6v29.9M435.4 11.6v29.9M440.8 11.6v29.9M476.4 11.6v29.9M509.9 11.6v29.9M515.7 11.6v29.9M519.0 11.6v29.9M533.1 11.6v29.9M546.2 11.6v29.9M554.3 11.6v29.9M573.9 11.6v29.9M576.9 11.6v29.9M578.4 11.6v29.9M591.6 11.6v29.9M595.6 11.6v29.9M597.6 11.6v29.9M604.2 11.6v29.9M608.2 11.6v29.9M610.6 11.6v29.9M613.0 11.6v29.9M659.6 11.6v29.9M682.1 11.6v29.9M692.5 11.6v29.9M694.1 11.6v29.9M706.4 11.6v29.9M708.8 11.6v29.9M711.9 11.6v29.9M715.8 11.6v29.9M766.3 11.6v29.9M771.8 11.6v29.9M774.2 11.6v29.9M776.1 11.6v29.9M777.8 11.6v29.9M779.7 11.6v29.9M785.7 11.6v29.9M787.6 11.6v29.9M798.8 11.6v29.9M805.2 11.6v29.9M807.4 11.6v29.9M842.3 11.6v29.9M845.0 11.6v29.9M847.6 11.6v29.9M859.6 11.6v29.9M866.3 11.6v29.9M869.9 11.6v29.9M871.8 11.6v29.9M883.3 11.6v29.9" stroke="#fff" stroke-width="0.45" opacity="0.55" fill="none"/>
<text x="48.60000000000002" y="59.6" fill="#b5c948">Arousal</text>
<g fill="#bfd248">
<rect x="230.8" y="41.5" width="2.3" height="29.5" opacity="0.70"/>
<rect x="234.0" y="41.5" width="1.4" height="29.5" opacity="0.60"/>
<rect x="236.1" y="41.5" width="1.0" height="29.5" opacity="0.60"/>
<rect x="237.8" y="41.5" width="1.0" height="29.5" opacity="0.70"/>
<rect x="241.9" y="41.5" width="1.7" height="29.5" opacity="0.60"/>
<rect x="244.8" y="41.5" width="6.3" height="29.5" opacity="0.95"/>
<rect x="252.4" y="41.5" width="3.5" height="29.5" opacity="0.95"/>
<rect x="257.1" y="41.5" width="2.8" height="29.5" opacity="0.75"/>
<rect x="261.1" y="41.5" width="4.4" height="29.5" opacity="0.70"/>
<rect x="268.1" y="41.5" width="1.7" height="29.5" opacity="0.60"/>
<rect x="273.9" y="41.5" width="1.2" height="29.5" opacity="0.50"/>
<rect x="276.0" y="41.5" width="1.7" height="29.5" opacity="0.45"/>
<rect x="278.6" y="41.5" width="2.3" height="29.5" opacity="0.55"/>
<rect x="285.6" y="41.5" width="1.4" height="29.5" opacity="0.60"/>
<rect x="290.0" y="41.5" width="1.7" height="29.5" opacity="0.80"/>
<rect x="292.6" y="41.5" width="4.4" height="29.5" opacity="0.65"/>
<rect x="297.0" y="41.5" width="5.2" height="29.5" opacity="0.80"/>
<rect x="302.2" y="41.5" width="8.7" height="29.5" opacity="0.95"/>
<rect x="313.6" y="41.5" width="6.5" height="29.5"/>
<rect x="322.0" y="41.5" width="2.4" height="29.5" opacity="0.85"/>
<rect x="328.1" y="41.5" width="6.5" height="29.5"/>
<rect x="334.6" y="41.5" width="3.0" height="29.5" opacity="0.60"/>
<rect x="353.9" y="41.5" width="2.1" height="29.5" opacity="0.85"/>
<rect x="362.6" y="41.5" width="1.2" height="29.5" opacity="0.55"/>
<rect x="367.0" y="41.5" width="1.7" height="29.5" opacity="0.60"/>
<rect x="370.1" y="41.5" width="1.4" height="29.5" opacity="0.55"/>
<rect x="375.7" y="41.5" width="1.2" height="29.5" opacity="0.55"/>
<rect x="381.0" y="41.5" width="3.5" height="29.5" opacity="0.70"/>
<rect x="385.4" y="41.5" width="1.2" height="29.5" opacity="0.50"/>
<rect x="387.6" y="41.5" width="1.2" height="29.5" opacity="0.50"/>
<rect x="392.4" y="41.5" width="3.5" height="29.5" opacity="0.80"/>
<rect x="397.1" y="41.5" width="4.9" height="29.5" opacity="0.65"/>
<rect x="403.7" y="41.5" width="6.1" height="29.5"/>
<rect x="412.1" y="41.5" width="6.5" height="29.5" opacity="0.80"/>
<rect x="419.5" y="41.5" width="4.4" height="29.5" opacity="0.90"/>
<rect x="425.6" y="41.5" width="6.1" height="29.5" opacity="0.85"/>
<rect x="433.8" y="41.5" width="2.8" height="29.5" opacity="0.70"/>
<rect x="438.4" y="41.5" width="4.7" height="29.5" opacity="0.85"/>
<rect x="451.0" y="41.5" width="1.0" height="29.5" opacity="0.55"/>
<rect x="471.9" y="41.5" width="1.0" height="29.5" opacity="0.70"/>
<rect x="476.6" y="41.5" width="1.2" height="29.5" opacity="0.70"/>
<rect x="481.9" y="41.5" width="3.5" height="29.5" opacity="0.75"/>
<rect x="485.9" y="41.5" width="3.0" height="29.5"/>
<rect x="492.9" y="41.5" width="1.6" height="29.5" opacity="0.80"/>
<rect x="506.4" y="41.5" width="1.2" height="29.5" opacity="0.60"/>
<rect x="508.6" y="41.5" width="2.1" height="29.5" opacity="0.75"/>
<rect x="520.0" y="41.5" width="1.6" height="29.5" opacity="0.70"/>
<rect x="525.1" y="41.5" width="1.4" height="29.5" opacity="0.60"/>
<rect x="527.4" y="41.5" width="4.4" height="29.5" opacity="0.60"/>
<rect x="534.7" y="41.5" width="1.0" height="29.5" opacity="0.55"/>
<rect x="545.7" y="41.5" width="1.2" height="29.5" opacity="0.70"/>
<rect x="554.1" y="41.5" width="8.2" height="29.5"/>
<rect x="574.1" y="41.5" width="1.0" height="29.5" opacity="0.60"/>
<rect x="577.2" y="41.5" width="1.4" height="29.5" opacity="0.60"/>
<rect x="582.1" y="41.5" width="1.2" height="29.5" opacity="0.70"/>
<rect x="583.9" y="41.5" width="1.2" height="29.5" opacity="0.70"/>
<rect x="589.5" y="41.5" width="1.4" height="29.5" opacity="0.70"/>
<rect x="594.2" y="41.5" width="1.4" height="29.5" opacity="0.70"/>
<rect x="598.6" y="41.5" width="1.4" height="29.5" opacity="0.70"/>
<rect x="600.5" y="41.5" width="1.2" height="29.5" opacity="0.70"/>
<rect x="611.2" y="41.5" width="2.8" height="29.5" opacity="0.70"/>
<rect x="616.1" y="41.5" width="1.0" height="29.5" opacity="0.60"/>
<rect x="618.9" y="41.5" width="1.0" height="29.5" opacity="0.60"/>
<rect x="636.2" y="41.5" width="2.3" height="29.5" opacity="0.75"/>
<rect x="657.2" y="41.5" width="1.0" height="29.5" opacity="0.70"/>
<rect x="663.3" y="41.5" width="1.0" height="29.5" opacity="0.70"/>
<rect x="679.1" y="41.5" width="1.0" height="29.5" opacity="0.70"/>
<rect x="681.2" y="41.5" width="1.0" height="29.5" opacity="0.60"/>
<rect x="687.1" y="41.5" width="1.0" height="29.5" opacity="0.60"/>
<rect x="690.6" y="41.5" width="1.2" height="29.5" opacity="0.60"/>
<rect x="700.9" y="41.5" width="1.2" height="29.5" opacity="0.70"/>
<rect x="706.1" y="41.5" width="1.0" height="29.5" opacity="0.70"/>
<rect x="715.4" y="41.5" width="1.4" height="29.5" opacity="0.70"/>
<rect x="721.3" y="41.5" width="1.0" height="29.5" opacity="0.60"/>
<rect x="724.1" y="41.5" width="0.9" height="29.5" opacity="0.60"/>
<rect x="735.0" y="41.5" width="1.2" height="29.5" opacity="0.60"/>
<rect x="737.1" y="41.5" width="1.6" height="29.5" opacity="0.55"/>
<rect x="768.2" y="41.5" width="0.9" height="29.5" opacity="0.70"/>
<rect x="771.7" y="41.5" width="2.6" height="29.5" opacity="0.90"/>
<rect x="775.2" y="41.5" width="2.3" height="29.5" opacity="0.85"/>
<rect x="787.5" y="41.5" width="1.0" height="29.5" opacity="0.60"/>
<rect x="794.1" y="41.5" width="3.8" height="29.5" opacity="0.75"/>
<rect x="798.9" y="41.5" width="1.4" height="29.5" opacity="0.80"/>
<rect x="803.2" y="41.5" width="3.1" height="29.5" opacity="0.85"/>
<rect x="839.5" y="41.5" width="3.1" height="29.5" opacity="0.85"/>
<rect x="843.8" y="41.5" width="1.4" height="29.5" opacity="0.60"/>
<rect x="849.6" y="41.5" width="1.2" height="29.5" opacity="0.60"/>
<rect x="853.1" y="41.5" width="1.2" height="29.5" opacity="0.70"/>
<rect x="855.4" y="41.5" width="1.2" height="29.5" opacity="0.60"/>
<rect x="857.8" y="41.5" width="1.0" height="29.5" opacity="0.60"/>
<rect x="860.1" y="41.5" width="4.4" height="29.5" opacity="0.70"/>
<rect x="865.4" y="41.5" width="3.5" height="29.5" opacity="0.80"/>
<rect x="869.4" y="41.5" width="5.6" height="29.5" opacity="0.50"/>
<rect x="877.1" y="41.5" width="5.8" height="29.5" opacity="0.85"/>
<rect x="884.1" y="41.5" width="3.5" height="29.5" opacity="0.80"/>
</g>
<path d="M246.2 41.5v29.5M249.2 41.5v29.5M254.5 41.5v29.5M262.5 41.5v29.5M294.0 41.5v29.5M298.7 41.5v29.5M300.8 41.5v29.5M303.5 41.5v29.5M306.3 41.5v29.5M307.8 41.5v29.5M309.5 41.5v29.5M315.0 41.5v29.5M317.1 41.5v29.5M329.7 41.5v29.5M331.2 41.5v29.5M333.0 41.5v29.5M382.1 41.5v29.5M394.0 41.5v29.5M398.6 41.5v29.5M405.5 41.5v29.5M408.0 41.5v29.5M414.1 41.5v29.5M415.6 41.5v29.5M417.0 41.5v29.5M421.3 41.5v29.5M422.9 41.5v29.5M427.5 41.5v29.5M430.1 41.5v29.5M439.8 41.5v29.5M441.8 41.5v29.5M483.1 41.5v29.5M528.5 41.5v29.5M556.3 41.5v29.5M559.3 41.5v29.5M795.9 41.5v29.5M861.3 41.5v29.5M867.2 41.5v29.5M871.8 41.5v29.5M874.0 41.5v29.5M878.4 41.5v29.5M880.2 41.5v29.5M881.5 41.5v29.5M885.5 41.5v29.5" stroke="#fff" stroke-width="0.55" opacity="0.6" fill="none"/>
<text x="48.60000000000002" y="89.0" fill="#ee82ee">Obstructive_Apnea</text>
<g fill="#f27fe4">
<rect x="244.8" y="71.0" width="1.7" height="29.6" opacity="0.90"/>
<rect x="301.0" y="71.0" width="1.2" height="29.6" opacity="0.80"/>
<rect x="304.2" y="71.0" width="1.2" height="29.6" opacity="0.80"/>
<rect x="308.0" y="71.0" width="1.2" height="29.6" opacity="0.80"/>
<rect x="309.9" y="71.0" width="1.2" height="29.6" opacity="0.80"/>
<rect x="328.5" y="71.0" width="1.4" height="29.6" opacity="0.75"/>
<rect x="332.5" y="71.0" width="1.4" height="29.6" opacity="0.75"/>
<rect x="394.5" y="71.0" width="7.0" height="29.6" opacity="0.95"/>
<rect x="405.0" y="71.0" width="5.8" height="29.6" opacity="0.95"/>
<rect x="411.6" y="71.0" width="5.2" height="29.6" opacity="0.90"/>
<rect x="417.4" y="71.0" width="6.5" height="29.6" opacity="0.95"/>
<rect x="426.5" y="71.0" width="1.2" height="29.6" opacity="0.70"/>
<rect x="431.7" y="71.0" width="1.2" height="29.6" opacity="0.70"/>
<rect x="437.8" y="71.0" width="1.2" height="29.6" opacity="0.70"/>
<rect x="445.4" y="71.0" width="1.4" height="29.6" opacity="0.60"/>
<rect x="516.0" y="71.0" width="2.6" height="29.6" opacity="0.75"/>
<rect x="520.7" y="71.0" width="1.7" height="29.6" opacity="0.75"/>
<rect x="599.6" y="71.0" width="1.7" height="29.6"/>
</g>
<text x="48.60000000000002" y="118.4" fill="#5cbf63">R</text>
<g fill="#5cc264">
<rect x="300.8" y="100.6" width="1.4" height="29.6" opacity="0.90"/>
<rect x="304.2" y="100.6" width="5.1" height="29.6"/>
<rect x="395.5" y="100.6" width="5.9" height="29.6"/>
<rect x="404.6" y="100.6" width="7.3" height="29.6"/>
<rect x="412.3" y="100.6" width="8.7" height="29.6"/>
<rect x="421.4" y="100.6" width="22.0" height="29.6"/>
<rect x="573.4" y="100.6" width="42.9" height="29.6"/>
<rect x="687.1" y="100.6" width="12.9" height="29.6"/>
<rect x="700.0" y="100.6" width="16.1" height="29.6"/>
<rect x="751.8" y="100.6" width="1.6" height="29.6"/>
<rect x="767.9" y="100.6" width="31.8" height="29.6"/>
<rect x="851.9" y="100.6" width="1.2" height="29.6" opacity="0.70"/>
<rect x="854.0" y="100.6" width="1.4" height="29.6" opacity="0.70"/>
<rect x="856.3" y="100.6" width="18.7" height="29.6"/>
</g>
<rect x="195.3" y="135.0" width="850.0" height="0.9" fill="#333"/>
<rect x="195.2" y="135.0" width="0.9" height="6.8" fill="#333"/>
<text x="195.7" y="160.6" text-anchor="middle" fill="#111">0</text>
<rect x="272.4" y="135.0" width="0.9" height="6.8" fill="#333"/>
<text x="272.9" y="160.6" text-anchor="middle" fill="#111">1</text>
<rect x="349.7" y="135.0" width="0.9" height="6.8" fill="#333"/>
<text x="350.1" y="160.6" text-anchor="middle" fill="#111">2</text>
<rect x="426.8" y="135.0" width="0.9" height="6.8" fill="#333"/>
<text x="427.3" y="160.6" text-anchor="middle" fill="#111">3</text>
<rect x="504.1" y="135.0" width="0.9" height="6.8" fill="#333"/>
<text x="504.5" y="160.6" text-anchor="middle" fill="#111">4</text>
<rect x="581.2" y="135.0" width="0.9" height="6.8" fill="#333"/>
<text x="581.7" y="160.6" text-anchor="middle" fill="#111">5</text>
<rect x="658.5" y="135.0" width="0.9" height="6.8" fill="#333"/>
<text x="658.9" y="160.6" text-anchor="middle" fill="#111">6</text>
<rect x="735.6" y="135.0" width="0.9" height="6.8" fill="#333"/>
<text x="736.1" y="160.6" text-anchor="middle" fill="#111">7</text>
<rect x="812.8" y="135.0" width="0.9" height="6.8" fill="#333"/>
<text x="813.3" y="160.6" text-anchor="middle" fill="#111">8</text>
<rect x="890.0" y="135.0" width="0.9" height="6.8" fill="#333"/>
<text x="890.5" y="160.6" text-anchor="middle" fill="#111">9</text>
<rect x="967.2" y="135.0" width="0.9" height="6.8" fill="#333"/>
<text x="967.7" y="160.6" text-anchor="middle" fill="#111">10</text>
<rect x="1044.5" y="135.0" width="0.9" height="6.8" fill="#333"/>
<text x="1044.9" y="160.6" text-anchor="middle" fill="#111">11</text>
</svg>
<table><colgroup><col style="width:227.8px"><col style="width:152.2px"><col style="width:140.9px"><col style="width:141.4px"><col style="width:137.0px"><col style="width:137.6px"><col style="width:178.1px"></colgroup><thead><tr><th>Annotation<svg class="srt" style="right:10px" viewBox="0 0 7 15"><path d="M3.5 0.6L6.9 7.2H0.1z" fill="#e2e2e2"/><path d="M3.5 14.2L6.9 10.6H0.1z" fill="#e2e2e2"/></svg></th><th>Instance<svg class="srt" style="right:10px" viewBox="0 0 7 15"><path d="M3.5 0.6L6.9 7.2H0.1z" fill="#e2e2e2"/><path d="M3.5 14.2L6.9 10.6H0.1z" fill="#e2e2e2"/></svg></th><th>Start<svg class="srt" style="right:10px" viewBox="0 0 7 15"><path d="M3.5 0.6L6.9 7.2H0.1z" fill="#e2e2e2"/><path d="M3.5 14.2L6.9 10.6H0.1z" fill="#e2e2e2"/></svg></th><th>Stop<svg class="srt" style="right:10px" viewBox="0 0 7 15"><path d="M3.5 0.6L6.9 7.2H0.1z" fill="#e2e2e2"/><path d="M3.5 14.2L6.9 10.6H0.1z" fill="#e2e2e2"/></svg></th><th>Start(s)<svg class="srt" style="right:10px" viewBox="0 0 7 15"><path d="M3.5 0.6L6.9 7.2H0.1z" fill="#e2e2e2"/><path d="M3.5 14.2L6.9 10.6H0.1z" fill="#e2e2e2"/></svg></th><th>Stop(s)<svg class="srt" style="right:11.8px" viewBox="0 0 7 15"><path d="M3.5 0.6L6.9 7.2H0.1z" fill="#e2e2e2"/><path d="M3.5 14.2L6.9 10.6H0.1z" fill="#e2e2e2"/></svg></th><th>Duration(s)<svg class="srt" style="right:11.1px" viewBox="0 0 7 15"><path d="M3.5 0.6L6.9 7.2H0.1z" fill="#e2e2e2"/><path d="M3.5 14.2L6.9 10.6H0.1z" fill="#e2e2e2"/></svg></th></tr></thead><tbody><tr><td>Arousal</td><td>.</td><td>22:26:24.1</td><td>22:26:36.7</td><td>1687.1</td><td>1699.7</td><td>12.6</td></tr><tr><td>Arousal</td><td>.</td><td>22:28:13.2</td><td>22:28:19.8</td><td>1796.2</td><td>1802.8</td><td>6.6</td></tr><tr><td>Arousal</td><td>.</td><td>22:30:07.3</td><td>22:30:16.1</td><td>1910.3</td><td>1919.1</td><td>8.8</td></tr><tr><td>Arousal</td><td>.</td><td>22:31:27.7</td><td>22:31:38.5</td><td>1990.7</td><td>2001.5</td><td>10.8</td></tr><tr><td>Arousal</td><td>.</td><td>22:34:48.5</td><td>22:35:03.6</td><td>2191.5</td><td>2206.6</td><td>15.1</td></tr><tr><td>Arousal</td><td>.</td><td>22:36:52.2</td><td>22:37:02</td><td>2315.2</td><td>2325</td><td>9.8</td></tr><tr><td>Arousal</td><td>.</td><td>22:38:41.0</td><td>22:38:52.4</td><td>2424.0</td><td>2435.4</td><td>11.4</td></tr></tbody></table>
</div></div></body></html>
